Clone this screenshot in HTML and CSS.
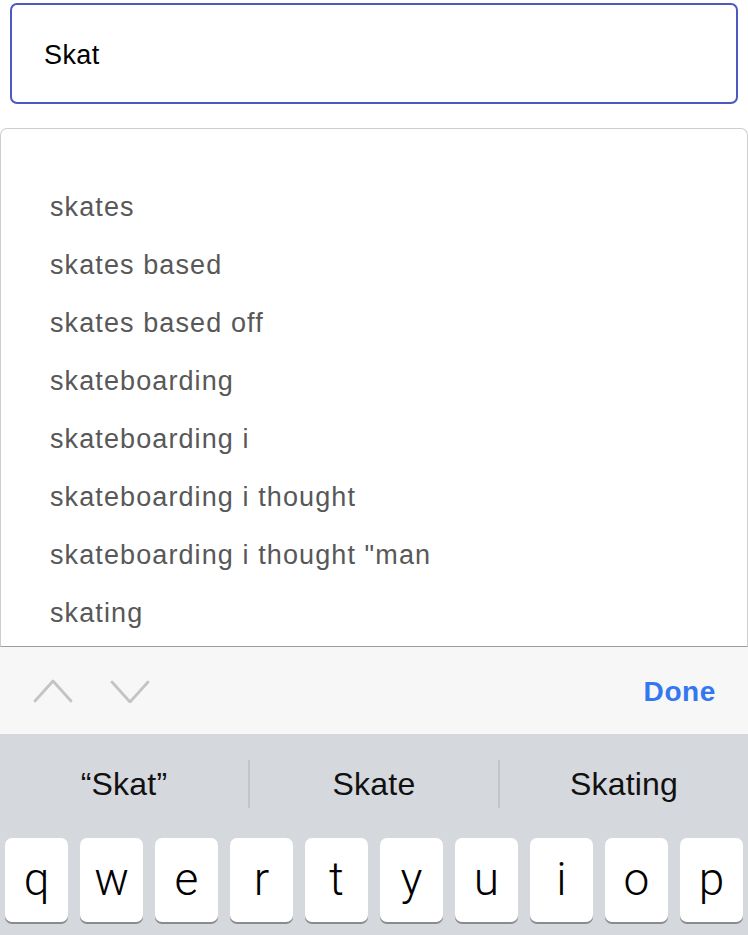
FILE: index.html
```html
<!DOCTYPE html>
<html>
<head>
<meta charset="utf-8">
<link rel="stylesheet" href="styles.css">
</head>
<body>
<div class="screen">
  <div class="search">Skat</div>
  <ul class="dropdown">
    <li>skates</li>
    <li>skates based</li>
    <li>skates based off</li>
    <li>skateboarding</li>
    <li>skateboarding i</li>
    <li>skateboarding i thought</li>
    <li>skateboarding i thought "man</li>
    <li>skating</li>
  </ul>
  <div class="toolbar">
    <svg class="chev" width="40" height="24" viewBox="0 0 40 24"><polyline points="2,22 20,2 38,22" /></svg>
    <svg class="chev" width="40" height="24" viewBox="0 0 40 24"><polyline points="2,3 20,23 38,3" /></svg>
    <span class="done">Done</span>
  </div>
  <div class="keyboard">
    <div class="suggestions">
      <div class="sugg">“Skat”</div>
      <div class="divider"></div>
      <div class="sugg">Skate</div>
      <div class="divider"></div>
      <div class="sugg">Skating</div>
    </div>
    <div class="keys">
      <div class="key">q</div>
      <div class="key">w</div>
      <div class="key">e</div>
      <div class="key">r</div>
      <div class="key">t</div>
      <div class="key">y</div>
      <div class="key">u</div>
      <div class="key">i</div>
      <div class="key">o</div>
      <div class="key">p</div>
    </div>
  </div>
</div>
</body>
</html>
```
FILE: styles.css
```css
html, body {
  margin: 0;
  padding: 0;
  background: #ffffff;
}
.screen {
  width: 748px;
  height: 935px;
  overflow: hidden;
  display: flex;
  flex-direction: column;
  font-family: "Liberation Sans", Arial, sans-serif;
}
.search {
  margin: 3px 10px 0;
  height: 101px;
  box-sizing: border-box;
  border: 2px solid #4b59c2;
  border-radius: 7px;
  padding: 3px 0 0 32px;
  display: flex;
  align-items: center;
  font-size: 27px;
  color: #000;
  letter-spacing: 0.4px;
}
.dropdown {
  list-style: none;
  margin: 24px 0 0;
  padding: 49px 0 0 49px;
  height: 519px;
  box-sizing: border-box;
  border: 1px solid #cdcdcd;
  border-bottom-color: #9c9c9c;
  border-radius: 7px 7px 0 0;
}
.dropdown li {
  height: 58px;
  line-height: 58px;
  font-size: 27px;
  color: #585858;
  letter-spacing: 1.1px;
  white-space: nowrap;
}
.toolbar {
  height: 87px;
  background: #f7f7f7;
  display: flex;
  align-items: center;
  padding: 0 32px 0 33px;
  gap: 37px;
}
.chev polyline {
  fill: none;
  stroke: #c4c4c7;
  stroke-width: 2.8;
  stroke-linecap: round;
  stroke-linejoin: round;
}
.done {
  margin-left: auto;
  margin-top: 3px;
  color: #3478f0;
  font-weight: bold;
  font-size: 28px;
  letter-spacing: 0.6px;
}
.keyboard {
  flex: 1;
  background: #d5d8dd;
}
.suggestions {
  height: 100px;
  display: flex;
  align-items: center;
}
.sugg {
  flex: 1;
  text-align: center;
  font-size: 32px;
  color: #111;
  letter-spacing: 0.2px;
  padding-top: 1px;
}
.divider {
  width: 2px;
  height: 48px;
  background: #c2c5ca;
}
.keys {
  display: flex;
  gap: 12px;
  padding: 4px 5px 0;
}
.key {
  width: 63px;
  height: 84px;
  background: #ffffff;
  border-radius: 7px;
  box-shadow: 0 2px 0 #898b8f;
  display: flex;
  align-items: center;
  justify-content: center;
  font-family: Roboto, "Liberation Sans", sans-serif;
  font-weight: 300;
  font-size: 46px;
  color: #000;
  padding-bottom: 2px;
  box-sizing: border-box;
}
```
